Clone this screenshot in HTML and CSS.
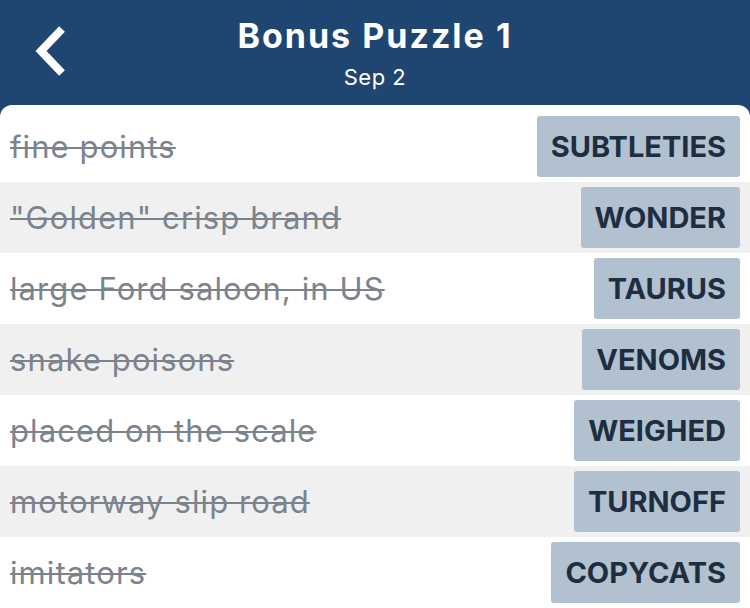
FILE: index.html
```html
<!DOCTYPE html>
<html lang="en">
<head>
    <meta charset="UTF-8">
    <meta name="viewport" content="width=device-width, initial-scale=1.0">
    <title>Bonus Puzzle 1</title>
    <link rel="stylesheet" href="styles.css">
</head>
<body>
<div class="header">
    <button class="back" aria-label="Back">
        <svg width="34" height="52" viewBox="0 0 34 52">
            <path d="M29 4 L8 26 L29 48" fill="none" stroke="#fff" stroke-width="8"/>
        </svg>
    </button>
    <div class="title">
        <h1>Bonus Puzzle 1</h1>
        <p>Sep 2</p>
    </div>
</div>

<div class="list">
    <div class="row">
        <span class="clue">fine points</span>
        <span class="answer">SUBTLETIES</span>
    </div>
    <div class="row">
        <span class="clue">"Golden" crisp brand</span>
        <span class="answer">WONDER</span>
    </div>
    <div class="row">
        <span class="clue">large Ford saloon, in US</span>
        <span class="answer">TAURUS</span>
    </div>
    <div class="row">
        <span class="clue">snake poisons</span>
        <span class="answer">VENOMS</span>
    </div>
    <div class="row">
        <span class="clue">placed on the scale</span>
        <span class="answer">WEIGHED</span>
    </div>
    <div class="row">
        <span class="clue">motorway slip road</span>
        <span class="answer">TURNOFF</span>
    </div>
    <div class="row">
        <span class="clue">imitators</span>
        <span class="answer">COPYCATS</span>
    </div>
</div>
</body>
</html>
```

FILE: styles.css
```css
body {
    margin: 0;
    padding: 0;
    background-color: #1f4571;
    font-family: Inter, "Open Sans", sans-serif;
    overflow: hidden;
}
.header {
    position: relative;
    height: 105px;
    color: white;
    text-align: center;
}
.back {
    position: absolute;
    left: 33px;
    top: 25px;
    padding: 0;
    border: none;
    background: none;
    cursor: pointer;
}
.title {
    padding-top: 14px;
}
.title h1 {
    margin: 0;
    font-size: 34px;
    font-weight: bold;
    line-height: 44px;
    letter-spacing: 2px;
}
.title p {
    margin: 5px 0 0;
    font-size: 22px;
    line-height: 28px;
    letter-spacing: 0.5px;
}
.list {
    background-color: white;
    border-radius: 12px 12px 0 0;
    padding-top: 6px;
    height: 503px;
}
.row {
    display: flex;
    justify-content: space-between;
    align-items: flex-start;
    height: 71px;
    padding: 5px 10px 0 10px;
    box-sizing: border-box;
}
.row:nth-child(even) {
    background-color: #f0f0f0;
}
.clue {
    font-size: 31px;
    line-height: 61px;
    letter-spacing: 1.1px;
    color: #7b838d;
    text-decoration: line-through;
    text-decoration-thickness: 2px;
}
.answer {
    background-color: #b1c1cf;
    color: #1e2e40;
    font-size: 29px;
    font-weight: bold;
    line-height: 61px;
    padding: 0 14px;
    border-radius: 3px;
}
```
